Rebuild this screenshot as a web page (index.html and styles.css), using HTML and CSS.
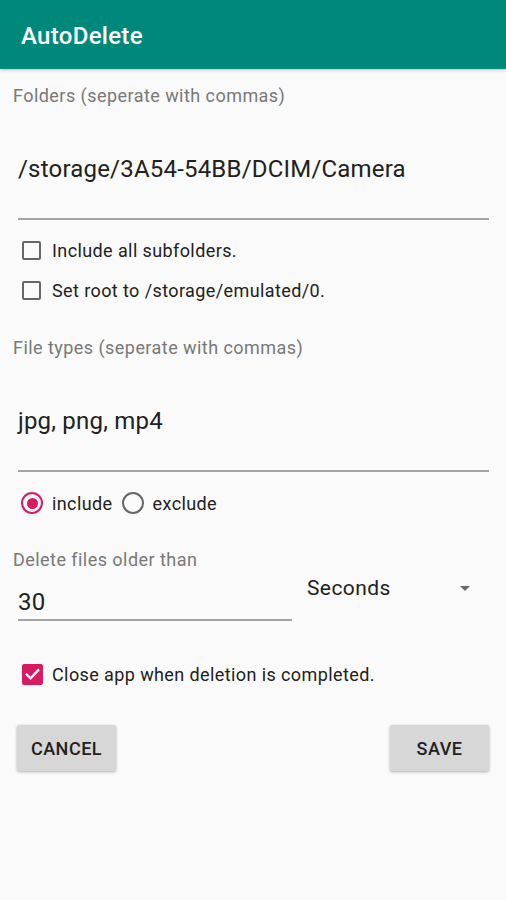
FILE: index.html
```html
<!DOCTYPE html>
<html>
<head>
<meta charset="utf-8">
<link rel="stylesheet" href="styles.css">
</head>
<body>
<header class="appbar"><h1 class="title">AutoDelete</h1></header>
<main class="content">
  <div class="label">Folders (seperate with commas)</div>
  <div class="field field-tall">/storage/3A54-54BB/DCIM/Camera</div>
  <div class="checks">
    <div class="check-row"><span class="box"></span><span class="check-text">Include all subfolders.</span></div>
    <div class="check-row"><span class="box"></span><span class="check-text">Set root to /storage/emulated/0.</span></div>
  </div>
  <div class="label label-2">File types (seperate with commas)</div>
  <div class="field field-tall">jpg, png, mp4</div>
  <div class="radio-row">
    <span class="radio radio-on"><span class="dot"></span></span><span class="check-text">include</span>
    <span class="radio radio-off"></span><span class="check-text">exclude</span>
  </div>
  <div class="age-row">
    <div class="age-col">
      <div class="label">Delete files older than</div>
      <div class="field field-short">30</div>
    </div>
    <div class="spinner">
      <span class="spinner-text">Seconds</span>
      <span class="arrow"></span>
    </div>
  </div>
  <div class="check-row close-row">
    <span class="box box-on"><svg viewBox="0 0 22 22" width="22" height="22"><path d="M5 11.5l4 4 8-8.5" fill="none" stroke="#fff" stroke-width="2.4" stroke-linecap="square"/></svg></span>
    <span class="check-text">Close app when deletion is completed.</span>
  </div>
  <div class="buttons">
    <button class="btn">CANCEL</button>
    <button class="btn">SAVE</button>
  </div>
</main>
</body>
</html>
```
FILE: styles.css
```css
* { box-sizing: border-box; }
html, body { margin: 0; padding: 0; }
body {
  background: #fafafa;
  font-family: Roboto, "Noto Sans", sans-serif;
  color: #212121;
  width: 506px;
  height: 900px;
  overflow: hidden;
}
.appbar {
  height: 69px;
  background: #00897b;
  display: flex;
  align-items: center;
  padding: 2px 0 0 21px;
  box-shadow: 0 1px 3px rgba(0,0,0,0.25);
}
.title {
  margin: 0;
  color: #fff;
  font-size: 24px;
  font-weight: 500;
  letter-spacing: 0.3px;
}
.content {
  padding: 17px 17px 0 13px;
}
.label {
  font-size: 18px;
  line-height: 20px;
  letter-spacing: 0.45px;
  color: #787878;
  height: 20px;
}
.label-2 { margin-top: 28px; }
.field {
  margin-left: 5px;
  font-size: 24px;
  line-height: 26px;
  letter-spacing: 0.2px;
  color: #212121;
  border-bottom: 2px solid #a3a3a3;
}
.field-tall {
  margin-top: 50px;
  padding-bottom: 36px;
}
.checks { margin-top: 10px; }
.check-row {
  height: 40px;
  display: flex;
  align-items: center;
  padding-left: 9px;
}
.box {
  width: 19px;
  height: 19px;
  border: 2px solid #666;
  border-radius: 2px;
  margin-right: 11px;
  flex: none;
  display: flex;
  align-items: center;
  justify-content: center;
}
.box-on {
  width: 21px;
  height: 21px;
  border: none;
  background: #d81b60;
  margin-right: 9px;
}
.check-text {
  font-size: 18px;
  letter-spacing: 0.4px;
  color: #212121;
}
.radio-row {
  margin-top: 11px;
  height: 40px;
  display: flex;
  align-items: center;
  padding-left: 8px;
}
.radio {
  width: 22px;
  height: 22px;
  border-radius: 50%;
  border: 2px solid #666;
  margin-right: 9px;
  flex: none;
  display: flex;
  align-items: center;
  justify-content: center;
}
.radio-on { border-color: #d81b60; }
.radio-off { margin-left: 9px; }
.dot {
  width: 11px;
  height: 11px;
  border-radius: 50%;
  background: #d81b60;
}
.age-row {
  margin-top: 27px;
  display: flex;
  align-items: center;
}
.age-col { width: 279px; flex: none; }
.field-short {
  margin-top: 19px;
  padding-bottom: 4px;
}
.spinner {
  flex: 1;
  display: flex;
  align-items: center;
  justify-content: space-between;
  padding: 0 19px 0 15px;
  margin-top: 5px;
}
.spinner-text {
  font-size: 21px;
  letter-spacing: 0.4px;
  color: #212121;
}
.arrow {
  width: 0;
  height: 0;
  border-left: 5px solid transparent;
  border-right: 5px solid transparent;
  border-top: 5px solid #6b6b6b;
}
.close-row { margin-top: 33px; }
.buttons {
  margin-top: 31px;
  display: flex;
  justify-content: space-between;
  padding-left: 4px;
}
.btn {
  width: 99px;
  height: 46px;
  border: none;
  border-radius: 2px;
  background: #d7d7d7;
  box-shadow: 0 1px 3px rgba(0,0,0,0.3);
  font-family: Roboto, "Noto Sans", sans-serif;
  font-size: 18px;
  font-weight: 500;
  letter-spacing: 0.5px;
  color: #212121;
  padding: 0;
}
```
